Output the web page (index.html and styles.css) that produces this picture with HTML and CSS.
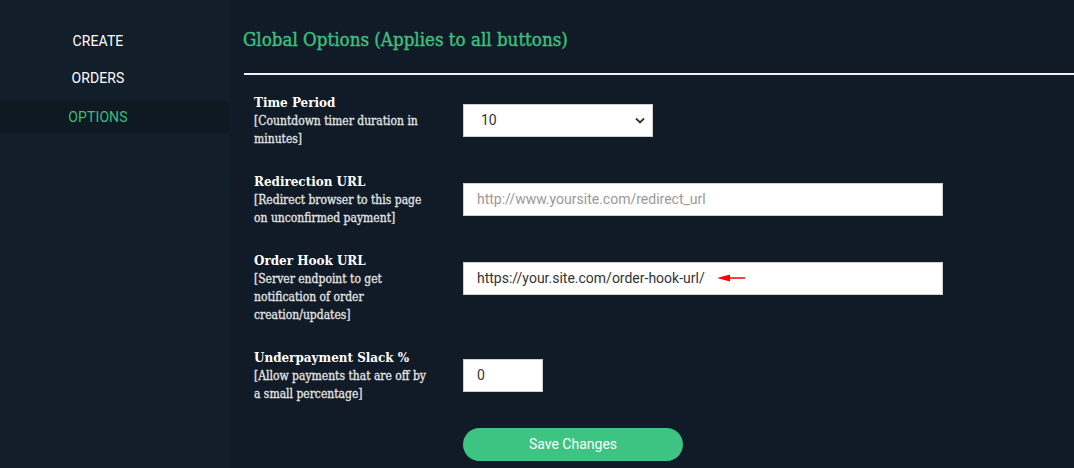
FILE: index.html
```html
<!DOCTYPE html>
<html>
<head>
<meta charset="utf-8">
<link rel="stylesheet" href="styles.css">
</head>
<body>
<div class="app">
  <nav class="sidebar">
    <a class="nav-item">CREATE</a>
    <a class="nav-item">ORDERS</a>
    <a class="nav-item active">OPTIONS</a>
  </nav>
  <main class="main">
    <h1 class="title">Global Options (Applies to all buttons)</h1>
    <hr class="rule">
    <div class="form">
      <div class="label">
        <div class="label-title">Time Period</div>
        <div class="label-sub">[Countdown timer duration in minutes]</div>
      </div>
      <div class="field">
        <div class="select">
          <span>10</span>
          <svg class="chev" width="10" height="7" viewBox="0 0 10 7"><path d="M1 1.5 L5 5.5 L9 1.5" fill="none" stroke="#333" stroke-width="1.8"/></svg>
        </div>
      </div>

      <div class="label">
        <div class="label-title">Redirection URL</div>
        <div class="label-sub">[Redirect browser to this page on unconfirmed payment]</div>
      </div>
      <div class="field">
        <div class="input wide placeholder">http://www.yoursite.com/redirect_url</div>
      </div>

      <div class="label">
        <div class="label-title">Order Hook URL</div>
        <div class="label-sub">[Server endpoint to get notification of order creation/updates]</div>
      </div>
      <div class="field">
        <div class="input wide">https://your.site.com/order-hook-url/
          <svg class="arrow" width="30" height="10" viewBox="0 0 30 10"><path d="M0 5 L13 1.5 L13 4.2 L28 4.2 L28 5.8 L13 5.8 L13 8.5 Z" fill="#f00"/></svg>
        </div>
      </div>

      <div class="label">
        <div class="label-title">Underpayment Slack %</div>
        <div class="label-sub">[Allow payments that are off by a small percentage]</div>
      </div>
      <div class="field">
        <div class="input small">0</div>
      </div>

      <div></div>
      <div class="actions">
        <button class="save">Save Changes</button>
      </div>
    </div>
  </main>
</div>
</body>
</html>
```

FILE: styles.css
```css
html, body {
  margin: 0;
  padding: 0;
  background: #101b27;
  height: 100%;
  overflow: hidden;
}
.app {
  display: flex;
  height: 468px;
}
.sidebar {
  width: 229px;
  flex: none;
  background: #131e2b;
  padding-top: 23px;
  display: flex;
  flex-direction: column;
}
.nav-item {
  display: block;
  width: 196px;
  text-align: center;
  font-family: Roboto, "Noto Sans", sans-serif;
  font-size: 14px;
  line-height: 37px;
  height: 37px;
  color: #ffffff;
  letter-spacing: 0.1px;
}
.nav-item.active {
  width: auto;
  padding-right: 33px;
  color: #3ebd7f;
  background: #0f1922;
  margin-top: 4px;
  height: 32px;
  line-height: 32px;
}
.main {
  flex: 1;
  padding-left: 14px;
}
.title {
  margin: 0;
  padding-top: 28px;
  font-family: "DejaVu Serif Condensed", "DejaVu Serif", serif;
  font-weight: normal;
  font-size: 18.6px;
  line-height: 24px;
  color: #3ebd7f;
  height: 45px;
  box-sizing: content-box;
  -webkit-text-stroke: 0.45px #3ebd7f;
}
.rule {
  margin: 0 0 0 1px;
  border: 0;
  height: 1.5px;
  background: #f2f2f2;
}
.form {
  display: grid;
  grid-template-columns: 209px 480px;
  row-gap: 25px;
  padding-left: 11px;
  padding-top: 19px;
}
.label {
  font-family: "DejaVu Serif Condensed", "DejaVu Serif", serif;
  color: #ffffff;
  padding-right: 33px;
}
.label-title {
  font-weight: bold;
  font-size: 13.3px;
  line-height: 18px;
}
.label-sub {
  font-size: 12px;
  line-height: 18px;
  color: #e4e4e4;
  -webkit-text-stroke: 0.3px #e4e4e4;
}
.field {
  padding-top: 10px;
}
.actions {
  margin-top: 0;
}
.select, .input {
  box-sizing: border-box;
  height: 33px;
  background: #fff;
  border: 1px solid #cfcfcf;
  font-family: Roboto, "Noto Sans", sans-serif;
  font-size: 14px;
  color: #333;
  display: flex;
  align-items: center;
  padding-left: 13px;
}
.select {
  width: 190px;
  justify-content: space-between;
  padding-left: 17px;
  padding-right: 7px;
}
.input.wide { width: 480px; }
.input.small { width: 80px; }
.input.placeholder { color: #999; }
.arrow { margin-left: 12px; }
.save {
  display: block;
  width: 220px;
  height: 33px;
  border: 0;
  border-radius: 17px;
  background: #3dc382;
  color: #fff;
  font-family: Roboto, "Noto Sans", sans-serif;
  font-size: 14px;
  padding: 0;
}
```
